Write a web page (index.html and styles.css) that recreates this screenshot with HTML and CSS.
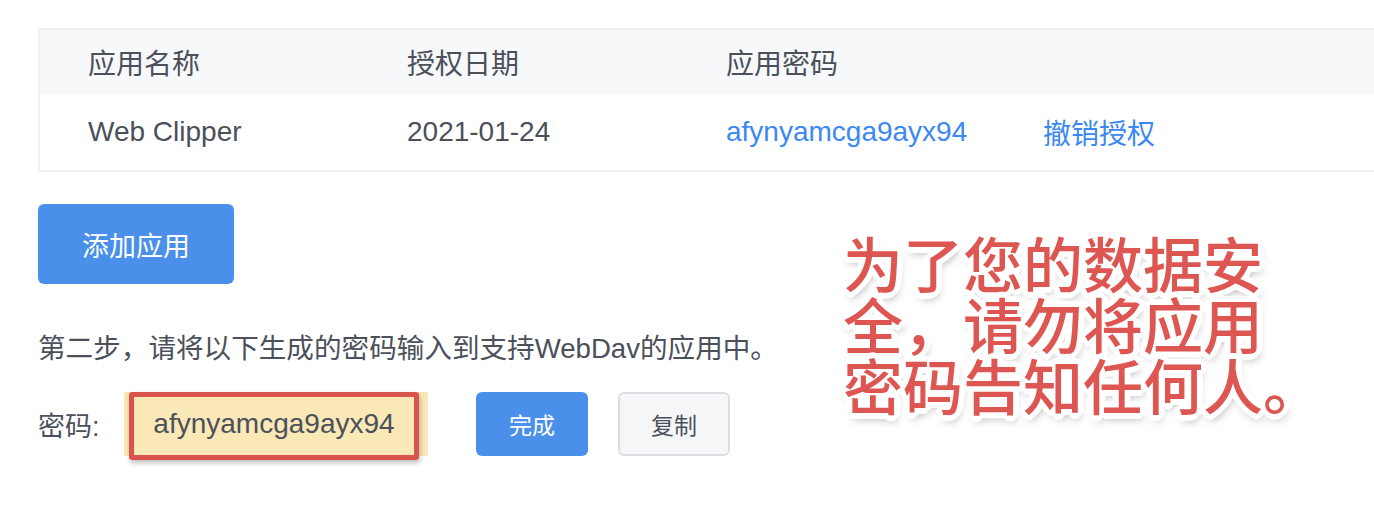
FILE: index.html
```html
<!DOCTYPE html>
<html lang="zh-CN">
<head>
<meta charset="utf-8">
<title>WebDav 应用密码</title>
<link rel="stylesheet" href="styles.css">
</head>
<body>
<div class="page">
  <div class="table">
    <div class="row head">
      <div class="cell">应用名称</div>
      <div class="cell">授权日期</div>
      <div class="cell">应用密码</div>
      <div class="cell"></div>
    </div>
    <div class="row body">
      <div class="cell">Web Clipper</div>
      <div class="cell">2021-01-24</div>
      <div class="cell link">afynyamcga9ayx94</div>
      <div class="cell link">撤销授权</div>
    </div>
  </div>

  <button class="btn btn-primary btn-large">添加应用</button>

  <p class="step">第二步，请将以下生成的密码输入到支持WebDav的应用中。</p>

  <div class="pw-row">
    <span class="pw-label">密码:</span>
    <div class="pw-box">
      <span class="pw-text">afynyamcga9ayx94</span>
      <span class="pw-mark"></span>
    </div>
    <button class="btn btn-primary btn-small">完成</button>
    <button class="btn btn-default btn-small">复制</button>
  </div>

  <div class="note">为了您的数据安<br>全，请勿将应用<br>密码告知任何人。</div>
</div>
</body>
</html>
```

FILE: styles.css
```css
html, body {
  margin: 0;
  padding: 0;
  background: #ffffff;
  overflow: hidden;
}

body {
  font-family: "Liberation Sans", "Noto Sans CJK SC", sans-serif;
  color: #4b505b;
}

.page {
  position: relative;
  width: 1374px;
  height: 514px;
  padding: 28px 0 0 38px;
  box-sizing: border-box;
  overflow: hidden;
}

.table {
  width: 1400px;
  border: 2px solid #efefef;
  border-right: none;
}

.row {
  display: grid;
  grid-template-columns: 319px 319px 319px 1fr;
  align-items: center;
  font-size: 28px;
}

.row.head {
  height: 64px;
  background: #f7f8fa;
}

.row.body {
  height: 76px;
  background: #ffffff;
}

.cell {
  padding-left: 48px;
  white-space: nowrap;
}

.link {
  color: #3b88f5;
}

.link:last-child {
  margin-left: -2px;
}

.btn {
  font-family: "Liberation Sans", "Noto Sans CJK SC", sans-serif;
  border-radius: 6px;
  cursor: pointer;
  padding: 0;
  display: flex;
  align-items: center;
  justify-content: center;
}

.btn-primary {
  background: #4a90ea;
  color: #ffffff;
  border: none;
}

.btn-default {
  background: #f5f6f8;
  color: #4b505b;
  border: 2px solid #dcdde1;
}

.btn-large {
  margin-top: 32px;
  width: 196px;
  height: 80px;
  font-size: 27px;
}

.btn-small {
  width: 112px;
  height: 64px;
  font-size: 23px;
}

.step {
  margin: 45px 0 0 0;
  font-size: 27.6px;
  line-height: 40px;
  white-space: nowrap;
}

.pw-row {
  margin-top: 23px;
  display: flex;
  align-items: center;
  height: 64px;
}

.pw-label {
  font-size: 27px;
  width: 86px;
}

.pw-box {
  position: relative;
  width: 304px;
  height: 64px;
  background: #fae8b7;
  display: flex;
  align-items: center;
  justify-content: center;
  margin-right: 48px;
}

.pw-text {
  font-size: 28px;
  color: #4b505b;
  padding-right: 4px;
}

.pw-mark {
  position: absolute;
  left: 5px;
  top: 0;
  width: 290px;
  height: 68px;
  box-sizing: border-box;
  border: 5px solid #d9534f;
  border-radius: 3px;
  box-shadow: 1px 3px 5px rgba(0, 0, 0, 0.25);
}

.pw-row .btn-default {
  margin-left: 30px;
}

.note {
  position: absolute;
  left: 843px;
  top: 231px;
  font-family: "Noto Sans CJK SC", sans-serif;
  font-weight: 500;
  font-size: 60px;
  line-height: 61px;
  color: #dd5652;
  white-space: nowrap;
  text-shadow:
    4px 0 0 #fff, -4px 0 0 #fff, 0 4px 0 #fff, 0 -4px 0 #fff,
    3px 3px 0 #fff, -3px 3px 0 #fff, 3px -3px 0 #fff, -3px -3px 0 #fff,
    5px 2px 0 #fff, -5px 2px 0 #fff, 2px 5px 0 #fff, -2px 5px 0 #fff,
    5px -2px 0 #fff, -5px -2px 0 #fff, 2px -5px 0 #fff, -2px -5px 0 #fff,
    6px 0 0 #fff, -6px 0 0 #fff, 0 6px 0 #fff, 0 -6px 0 #fff,
    2px 6px 8px rgba(0, 0, 0, 0.35);
}
```
